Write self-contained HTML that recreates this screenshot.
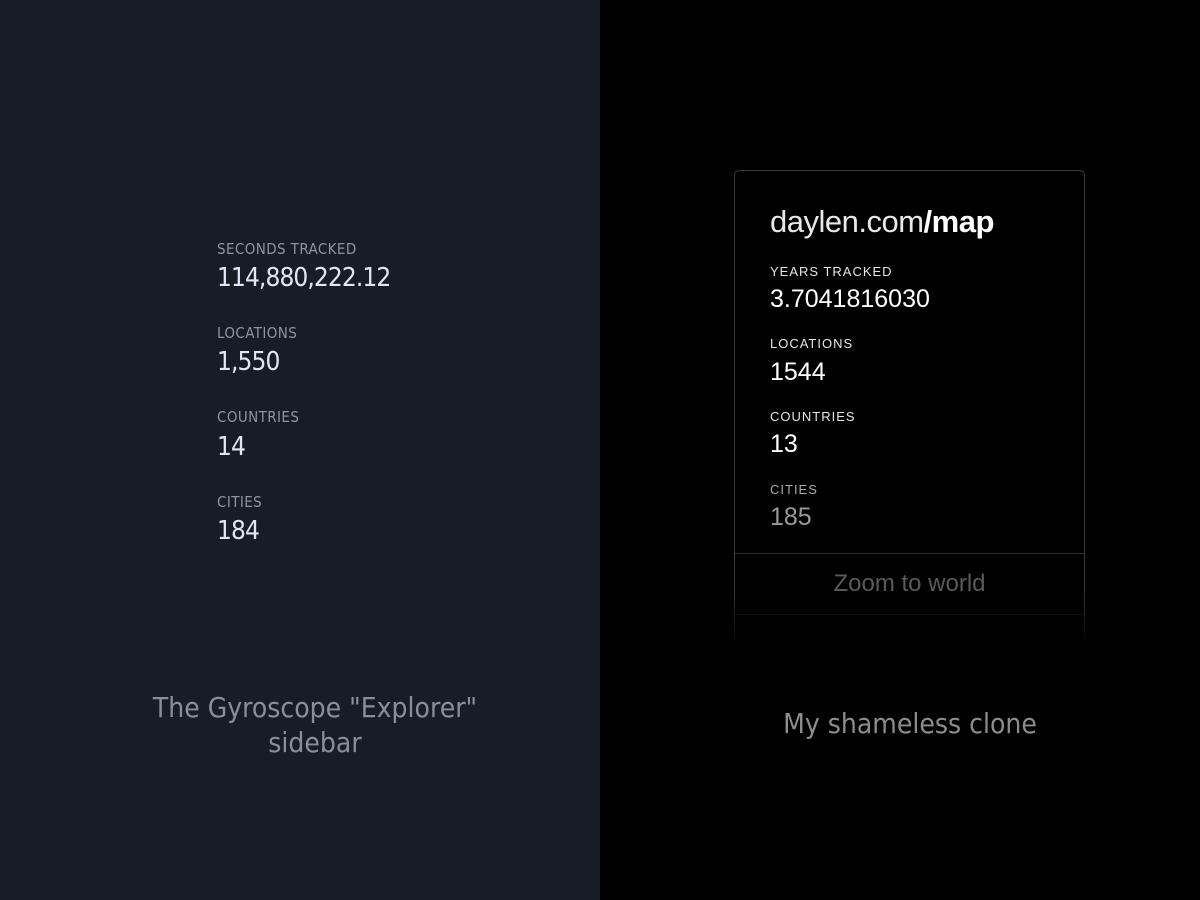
<!DOCTYPE html>
<html><head><meta charset="utf-8"><style>
*{margin:0;padding:0;box-sizing:border-box}
body{width:1200px;height:900px;position:relative;overflow:hidden;font-family:"Liberation Sans",sans-serif;background:#000}
.left{position:absolute;left:0;top:0;width:600px;height:900px;background:#171d26}
.right{position:absolute;left:600px;top:0;width:600px;height:900px;background:#000}
.abs{position:absolute;white-space:nowrap}
.gl{color:#8a96a3;font-size:15px;letter-spacing:0.4px;font-family:"DejaVu Sans Condensed","Liberation Sans",sans-serif}
.gv{color:#dde7f5;font-size:26px;font-family:"DejaVu Sans Condensed","Liberation Sans",sans-serif;letter-spacing:-0.9px}
.cap{color:#8a8f96;font-size:28px;text-align:center;font-family:"DejaVu Sans Condensed","Liberation Sans",sans-serif}
.card{position:absolute;left:734px;top:170px;width:351px;height:480px;border:1px solid #3a3a3a;border-bottom:none;border-radius:5px 5px 0 0;background:#000}
.fade{position:absolute;left:730px;top:590px;width:360px;height:70px;background:linear-gradient(rgba(0,0,0,0),#000 80%)}
.rl{color:#e6e6e6;font-size:13px;letter-spacing:1px}
.rv{color:#fff;font-size:25px}
</style></head><body>
<div class="left"></div>
<div class="right"></div>

<div class="abs gl" style="left:217px;top:240px">SECONDS TRACKED</div>
<div class="abs gv" style="left:217px;top:263px">114,880,222.12</div>
<div class="abs gl" style="left:217px;top:324px">LOCATIONS</div>
<div class="abs gv" style="left:217px;top:347px">1,550</div>
<div class="abs gl" style="left:217px;top:408px">COUNTRIES</div>
<div class="abs gv" style="left:217px;top:432px">14</div>
<div class="abs gl" style="left:217px;top:493px">CITIES</div>
<div class="abs gv" style="left:217px;top:516px">184</div>
<div class="abs cap" style="left:90px;width:450px;top:690px;line-height:35px;white-space:normal">The Gyroscope "Explorer"<br>sidebar</div>

<div class="card">
  <div class="abs" style="left:35px;top:33px;font-size:31px;color:#e8e8e8;letter-spacing:-0.5px"><span style="font-weight:300">daylen.com</span><b style="color:#fff">/map</b></div>
  <div class="abs rl" style="left:35px;top:93px">YEARS TRACKED</div>
  <div class="abs rv" style="left:35px;top:114px">3.7041816030</div>
  <div class="abs rl" style="left:35px;top:165px">LOCATIONS</div>
  <div class="abs rv" style="left:35px;top:187px">1544</div>
  <div class="abs rl" style="left:35px;top:238px">COUNTRIES</div>
  <div class="abs rv" style="left:35px;top:259px">13</div>
  <div class="abs rl" style="left:35px;top:311px;color:#aaa">CITIES</div>
  <div class="abs rv" style="left:35px;top:332px;color:#999">185</div>
  <div class="abs" style="left:0;top:382px;width:349px;height:1px;background:#2e2e2e"></div>
  <div class="abs" style="left:0;top:399px;width:349px;text-align:center;font-size:24px;color:#5a5a5a">Zoom to world</div>
  <div class="abs" style="left:0;top:443px;width:349px;height:1px;background:#1e1e1e"></div>
</div>
<div class="fade"></div>
<div class="abs cap" style="left:700px;width:420px;top:707px;color:#8c8c8c">My shameless clone</div>
</body></html>
